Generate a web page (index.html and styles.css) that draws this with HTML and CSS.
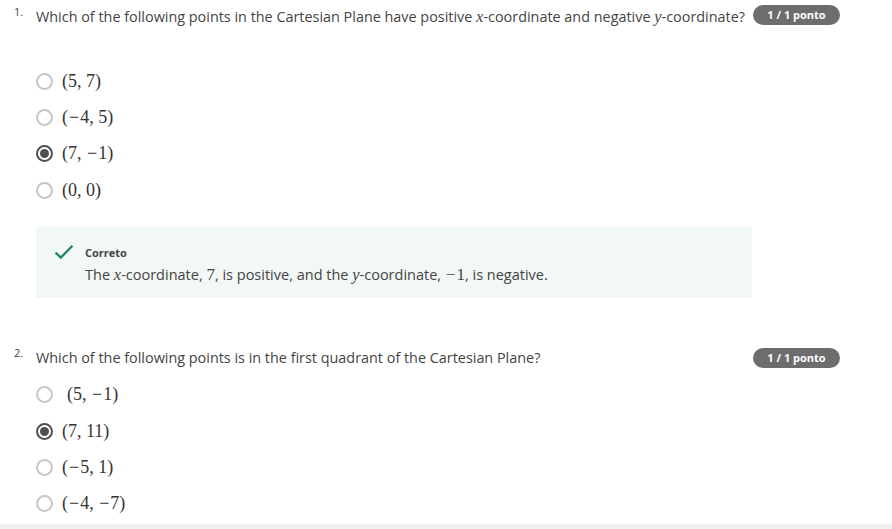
FILE: index.html
```html
<!DOCTYPE html>
<html>
<head>
<meta charset="utf-8">
<link rel="stylesheet" href="styles.css">
</head>
<body>
<div class="page">
  <section class="question q1">
    <div class="qhead">
      <span class="qnum">1.</span>
      <span class="qtext">Which of the following points in the Cartesian Plane have positive <i class="mi">x</i>-coordinate and negative <i class="mi">y</i>-coordinate?</span>
      <span class="badge">1 / 1 ponto</span>
    </div>
    <ul class="options">
      <li class="opt"><span class="radio"></span><span class="math">(5, 7)</span></li>
      <li class="opt"><span class="radio"></span><span class="math">(<span class="neg">−</span>4, 5)</span></li>
      <li class="opt"><span class="radio on"></span><span class="math">(7, <span class="neg">−</span>1)</span></li>
      <li class="opt"><span class="radio"></span><span class="math">(0, 0)</span></li>
    </ul>
    <div class="feedback">
      <svg class="check" width="20" height="16" viewBox="0 0 20 16"><path d="M1.5 8.5 L6.8 13.6 L18.5 1.8" fill="none" stroke="#1f8354" stroke-width="2.2"/></svg>
      <div class="fbody">
        <div class="fbtitle">Correto</div>
        <div class="fbtext">The <i class="mi">x</i>-coordinate, <span class="mn">7</span>, is positive, and the <i class="mi">y</i>-coordinate, <span class="mn"><span class="neg">−</span>1</span>, is negative.</div>
      </div>
    </div>
  </section>
  <section class="question q2">
    <div class="qhead">
      <span class="qnum">2.</span>
      <span class="qtext">Which of the following points is in the first quadrant of the Cartesian Plane?</span>
      <span class="badge">1 / 1 ponto</span>
    </div>
    <ul class="options">
      <li class="opt"><span class="radio"></span><span class="math pad">(5, <span class="neg">−</span>1)</span></li>
      <li class="opt"><span class="radio on"></span><span class="math">(7, 11)</span></li>
      <li class="opt"><span class="radio"></span><span class="math">(<span class="neg">−</span>5, 1)</span></li>
      <li class="opt"><span class="radio"></span><span class="math">(<span class="neg">−</span>4, <span class="neg">−</span>7)</span></li>
    </ul>
  </section>
  <div class="footer"></div>
</div>
</body>
</html>
```
FILE: styles.css
```css
html, body {
  margin: 0;
  padding: 0;
  background: #fff;
}
body {
  font-family: "Open Sans", "Liberation Sans", sans-serif;
  color: #444;
  width: 892px;
  height: 529px;
  overflow: hidden;
}
.page {
  display: flex;
  flex-direction: column;
  height: 529px;
}
.question {
  padding-left: 14px;
  padding-right: 52px;
}
.q1 { padding-top: 5px; }
.q2 { padding-top: 48px; }
.qhead {
  display: flex;
  align-items: flex-start;
  height: 20px;
}
.qnum {
  width: 22px;
  font-size: 11px;
  line-height: 16px;
  margin-top: -1px;
}
.qtext {
  flex: 1;
  font-size: 14.4px;
  line-height: 20px;
  margin-top: 2px;
  white-space: nowrap;
}
.mi {
  font-family: "Liberation Serif", "DejaVu Serif", serif;
  font-style: italic;
  font-size: 16.5px;
}
.mn {
  font-family: "Liberation Serif", "DejaVu Serif", serif;
  font-size: 17px;
}
.neg {
  padding: 0 1px;
}
.badge {
  flex-shrink: 0;
  width: 87px;
  height: 20px;
  border-radius: 10px;
  background: #6d6d6d;
  color: #fff;
  font-size: 11px;
  font-weight: 700;
  line-height: 20px;
  text-align: center;
}
.q2 .badge { margin-top: 2px; }
.options {
  list-style: none;
  margin: 0;
  padding: 0 0 0 22px;
}
.q1 .options { margin-top: 38px; }
.q2 .options { margin-top: 11px; }
.opt {
  display: flex;
  align-items: center;
  height: 36.4px;
}
.radio {
  box-sizing: border-box;
  width: 17px;
  height: 17px;
  border: 2px solid #c6c6c6;
  border-radius: 50%;
  margin-right: 9px;
  display: flex;
  align-items: center;
  justify-content: center;
  flex-shrink: 0;
}
.radio.on {
  border-color: #4f4f4f;
}
.radio.on::after {
  content: "";
  width: 9px;
  height: 9px;
  border-radius: 50%;
  background: #4f4f4f;
}
.math {
  font-family: "Liberation Serif", "DejaVu Serif", serif;
  font-size: 18px;
  color: #333;
}
.math.pad { padding-left: 5px; }
.feedback {
  margin: 18px 0 0 22px;
  width: 716px;
  height: 71px;
  box-sizing: border-box;
  background: #f2f8f6;
  display: flex;
  align-items: flex-start;
  padding: 17px 0 0 18px;
}
.check {
  margin-right: 11px;
  flex-shrink: 0;
}
.fbtitle {
  font-size: 11px;
  font-weight: 700;
  line-height: 16px;
  margin-top: 1px;
}
.fbtext {
  font-size: 14.5px;
  line-height: 20px;
  margin-top: 4px;
}
.footer {
  margin-top: auto;
  height: 5px;
  background: #f0f0f0;
}
```
